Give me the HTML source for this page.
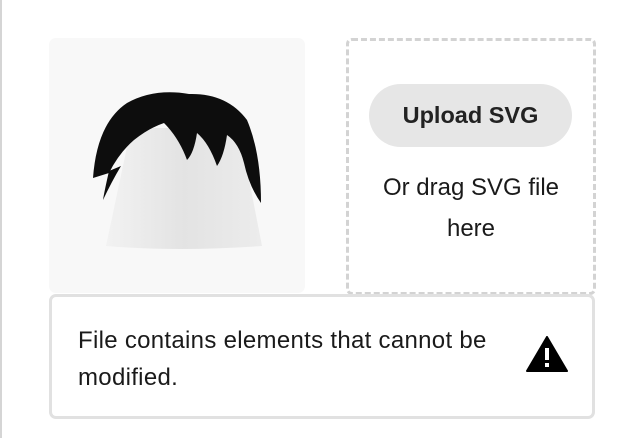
<!DOCTYPE html>
<html><head><style>
body{margin:0;width:625px;height:438px;background:#fff;position:relative;overflow:hidden;font-family:"Liberation Sans",sans-serif;color:#1a1a1a}
.lb{position:absolute;left:0;top:0;width:2px;height:438px;background:#d5d5d5}
.img{position:absolute;left:49px;top:38px;width:256px;height:255px;background:#f8f8f8;border-radius:7px}
.dz{position:absolute;left:346px;top:38px;width:244px;height:251px;border:3px dashed #d3d3d3;border-radius:6px}
.btn{position:absolute;left:369px;top:84px;width:203px;height:63px;background:#e6e6e6;border-radius:32px;font-weight:bold;font-size:23.5px;line-height:63px;text-align:center;color:#222}
.dt{position:absolute;left:346px;width:250px;text-align:center;font-size:24px;top:167px;line-height:41px}
.warn{position:absolute;left:49px;top:294px;width:540px;height:119px;border:3px solid #e1e1e1;border-radius:7px}
.wt{position:absolute;left:78px;top:322px;width:450px;font-size:24px;line-height:37px;letter-spacing:0.3px}
</style></head><body>
<div class="lb"></div>
<div class="img">
<svg width="256" height="255" viewBox="0 0 256 255">
<defs><linearGradient id="g" x1="0" x2="1"><stop offset="0" stop-color="#f2f2f2"/><stop offset=".5" stop-color="#e3e3e3"/><stop offset="1" stop-color="#ececec"/></linearGradient></defs>
<path d="M82 90 L57 208 Q128 214 213 208 L190 90 Z" fill="url(#g)"/>
<path d="M44 140 Q48 85 78 65 Q105 50 140 56 Q178 55 198 82 Q212 115 212 165 Q200 148 195 125 Q190 105 178 97 Q175 118 168 128 Q160 105 148 95 Q145 115 138 122 Q130 100 115 85 Q100 90 85 102 Q70 115 60 135 Z" fill="#0d0d0d"/>
<path d="M60 133 Q55 155 54 162 Q63 143 72 128 Z" fill="#0d0d0d"/>
</svg></div>
<div class="dz"></div>
<div class="btn">Upload SVG</div>
<div class="dt">Or drag SVG file<br>here</div>
<div class="warn"></div>
<div class="wt">File contains elements that cannot be modified.</div>
<svg style="position:absolute;left:526px;top:336px" width="42" height="36" viewBox="0 0 42 36"><path d="M21 1 L41 35 L1 35 Z" fill="#000" stroke="#000" stroke-linejoin="round" stroke-width="2"/><rect x="19" y="12" width="4" height="12" fill="#fff"/><rect x="19" y="27" width="4" height="4" fill="#fff"/></svg>
</body></html>
